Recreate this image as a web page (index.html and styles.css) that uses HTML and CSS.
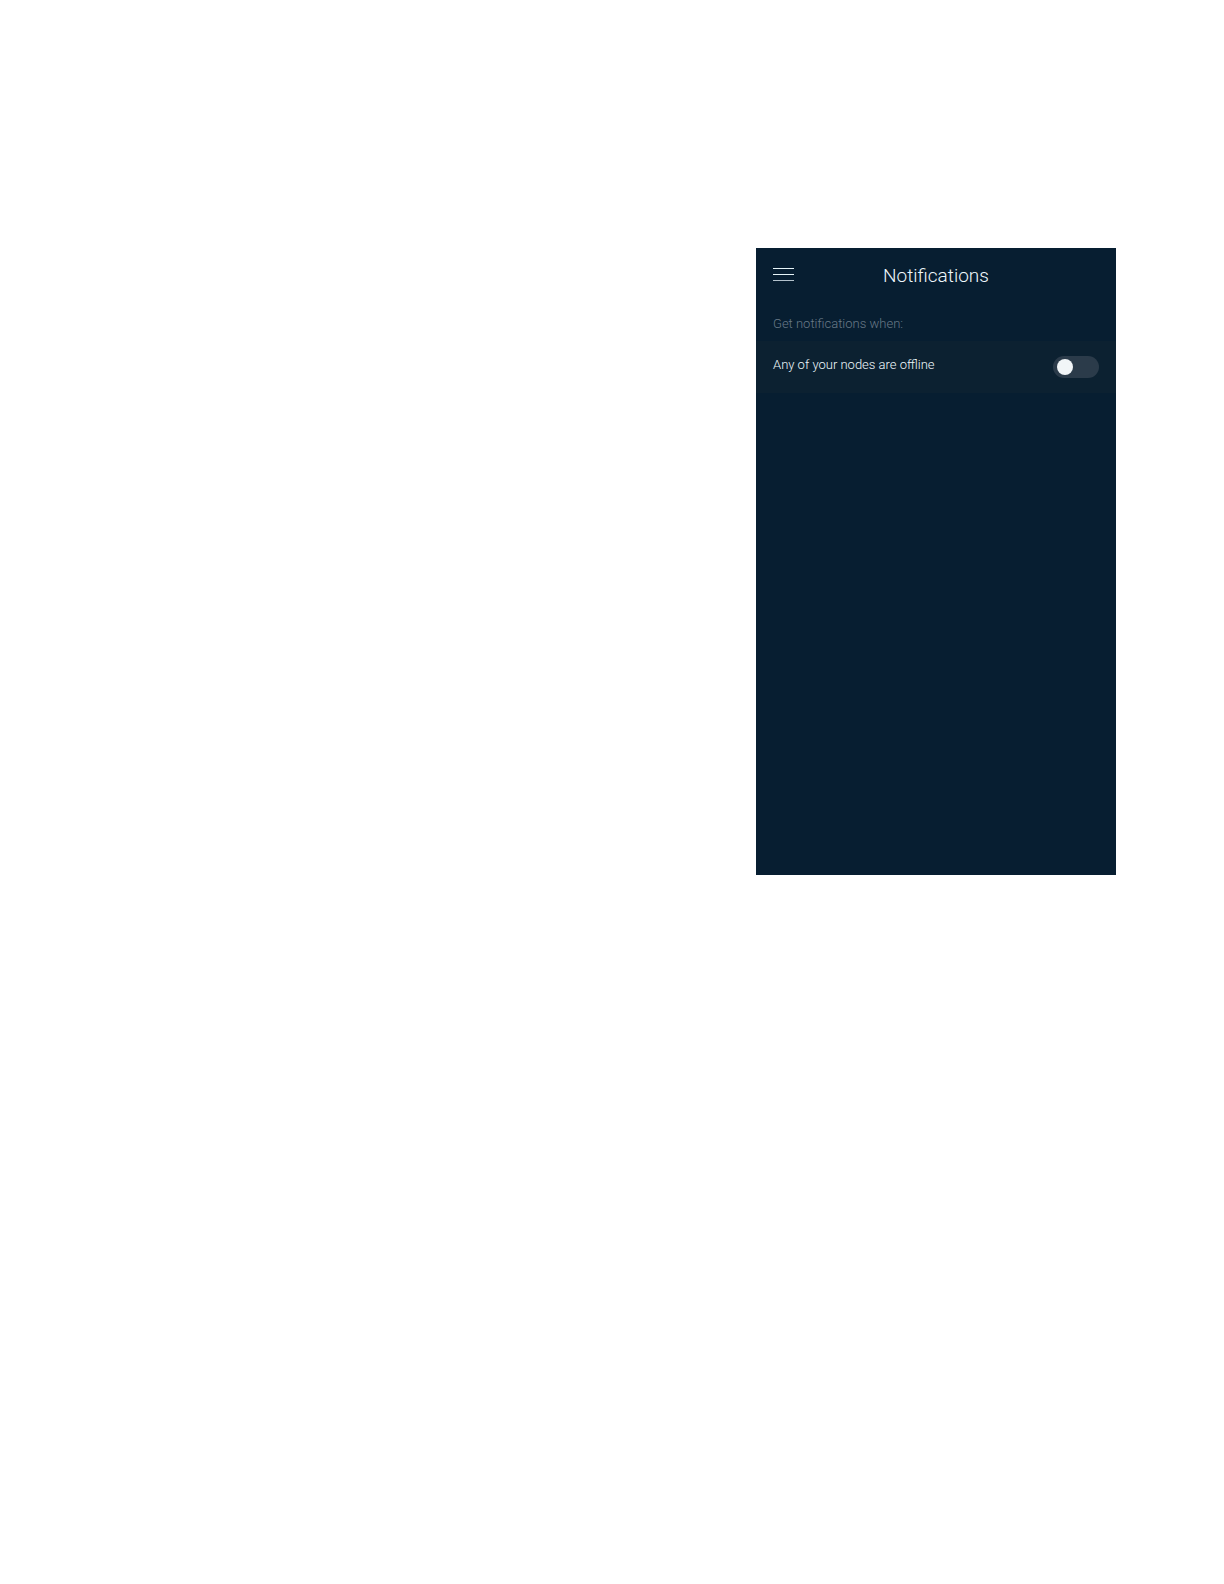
FILE: index.html
```
<!DOCTYPE html>
<html lang="en">
  <head>
    <meta charset="utf-8">
    <meta name="viewport" content="width=device-width, initial-scale=1.0">
    <title>Notifications</title>
    <link rel="stylesheet" href="styles.css">
  </head>
  <body>
    <main class="screen">
      <header class="topbar">
        <button class="menu-button" type="button" aria-label="Menu">
          <svg width="21" height="15" viewBox="0 0 21 15">
            <path d="M0 1.5h21M0 7.5h21" stroke="#e6f4f8" />
            <path d="M0 13.5h21" stroke="#b3c2cc" />
          </svg>
        </button>
        <h1 class="title">Notifications</h1>
      </header>

      <p class="section-label">Get notifications when:</p>

      <label class="row">
        <span class="row-text">Any of your nodes are offline</span>
        <input class="toggle" type="checkbox" role="switch">
      </label>
    </main>
  </body>
</html>
```

FILE: styles.css
```
* {
  box-sizing: border-box;
}

body {
  margin: 0;
  padding: 248px 108px 80px;
  display: flex;
  justify-content: flex-end;
  background: #fff;
  font-family: Roboto, "Liberation Sans", sans-serif;
  font-size: 13px;
  font-weight: 300;
}

.screen {
  width: 100%;
  max-width: 360px;
  aspect-ratio: 360 / 627;
  background: #071e31;
}

.topbar {
  display: grid;
  grid-template-columns: 24px 1fr 24px;
  align-items: center;
  padding: 16px 16px 0;
}

.menu-button {
  display: flex;
  width: 24px;
  padding: 0 1px 4px;
  border: 0;
  background: none;
  cursor: pointer;
}

.title {
  margin: 0;
  color: #eff8fc;
  font-size: 19px;
  font-weight: 300;
  line-height: 24px;
  text-align: center;
}

.section-label {
  margin: 0;
  padding: 28px 17px 9px;
  color: #697a88;
  line-height: 16px;
}

.row {
  display: flex;
  align-items: center;
  justify-content: space-between;
  min-height: 52px;
  padding: 0 17px;
  background: #0c2131;
  cursor: pointer;
}

.row-text {
  padding-bottom: 4px;
  color: #eff8fc;
  line-height: 16px;
}

.toggle {
  appearance: none;
  display: flex;
  align-items: center;
  width: 46px;
  height: 22px;
  margin: 0;
  padding: 0 4px;
  border-radius: 11px;
  background: #2b3b4a;
  cursor: pointer;
}

.toggle::before {
  content: "";
  width: 16px;
  height: 16px;
  border-radius: 50%;
  background: #f1f5f7;
}

.toggle:checked {
  justify-content: flex-end;
  background: #3d8fd1;
}
```
